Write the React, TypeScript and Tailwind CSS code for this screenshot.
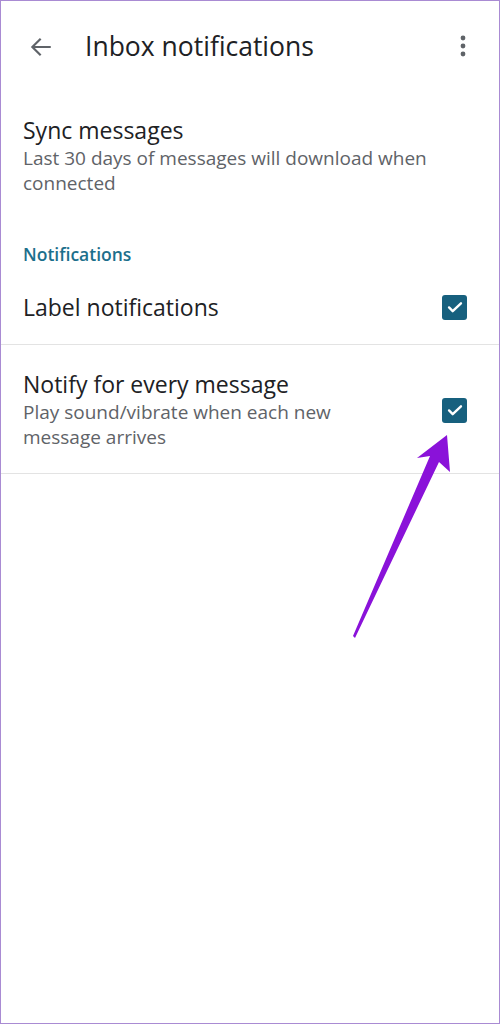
import React from "react";

function Check() {
  return (
    <div className="flex h-[25px] w-[25px] items-center justify-center rounded-[3px] bg-[#17607e]">
      <svg width="22" height="22" viewBox="0 0 24 24" fill="none">
        <path d="M5.5 12.5l4 4L18.5 8" stroke="#fff" strokeWidth="2.6" strokeLinecap="round" strokeLinejoin="round" />
      </svg>
    </div>
  );
}

export default function App() {
  return (
    <div
      className="relative h-[1024px] w-[500px] overflow-hidden border border-[#a98bd3] bg-white"
      style={{ fontFamily: "'Open Sans', Roboto, sans-serif" }}
    >
      {/* top bar */}
      <div className="flex h-[90px] items-center pl-[27px] pr-[24px]">
        <svg width="26" height="26" viewBox="0 0 24 24" fill="none" className="mt-[1px]">
          <path d="M20 12H4.5M11 5l-7 7 7 7" stroke="#5f6368" strokeWidth="2" strokeLinecap="square" />
        </svg>
        <div className="ml-[31px] flex-1 text-[26.5px] leading-none text-[#202124]">Inbox notifications</div>
        <svg width="8" height="24" viewBox="0 0 8 24" className="mr-[8px]">
          <circle cx="4" cy="4" r="2.4" fill="#5f6368" />
          <circle cx="4" cy="12" r="2.4" fill="#5f6368" />
          <circle cx="4" cy="20" r="2.4" fill="#5f6368" />
        </svg>
      </div>

      {/* sync messages */}
      <div className="px-[22px] pt-[25px]">
        <div className="text-[23px] leading-[29px] text-[#202124]">Sync messages</div>
        <div className="mt-[1px] text-[19px] leading-[25px] text-[#5f6368]">
          Last 30 days of messages will download when connected
        </div>
      </div>

      {/* section header */}
      <div className="px-[22px] pt-[46px] text-[17.5px] font-semibold leading-[24px] text-[#1c6f8c]">Notifications</div>

      {/* label notifications */}
      <div className="flex h-[79px] items-center border-b border-[#e3e3e3] pt-[4px] pl-[22px] pr-[32px]">
        <div className="flex-1 text-[23px] leading-[29px] text-[#202124]">Label notifications</div>
        <Check />
      </div>

      {/* notify every message */}
      <div className="flex h-[129px] items-center border-b border-[#e3e3e3] pt-[2px] pl-[22px] pr-[32px]">
        <div className="flex-1">
          <div className="text-[23px] leading-[28px] text-[#202124]">Notify for every message</div>
          <div className="mt-[2px] w-[360px] text-[19px] leading-[25px] text-[#5f6368]">
            Play sound/vibrate when each new message arrives
          </div>
        </div>
        <Check />
      </div>

      {/* annotation arrow */}
      <svg className="pointer-events-none absolute left-0 top-0" width="500" height="1024" viewBox="0 0 500 1024">
        <path d="M446 434 L449 471 L438 461 L354 637 L352 635 L429 455 L416 457 Z" fill="#8a12d9" />
      </svg>
    </div>
  );
}
